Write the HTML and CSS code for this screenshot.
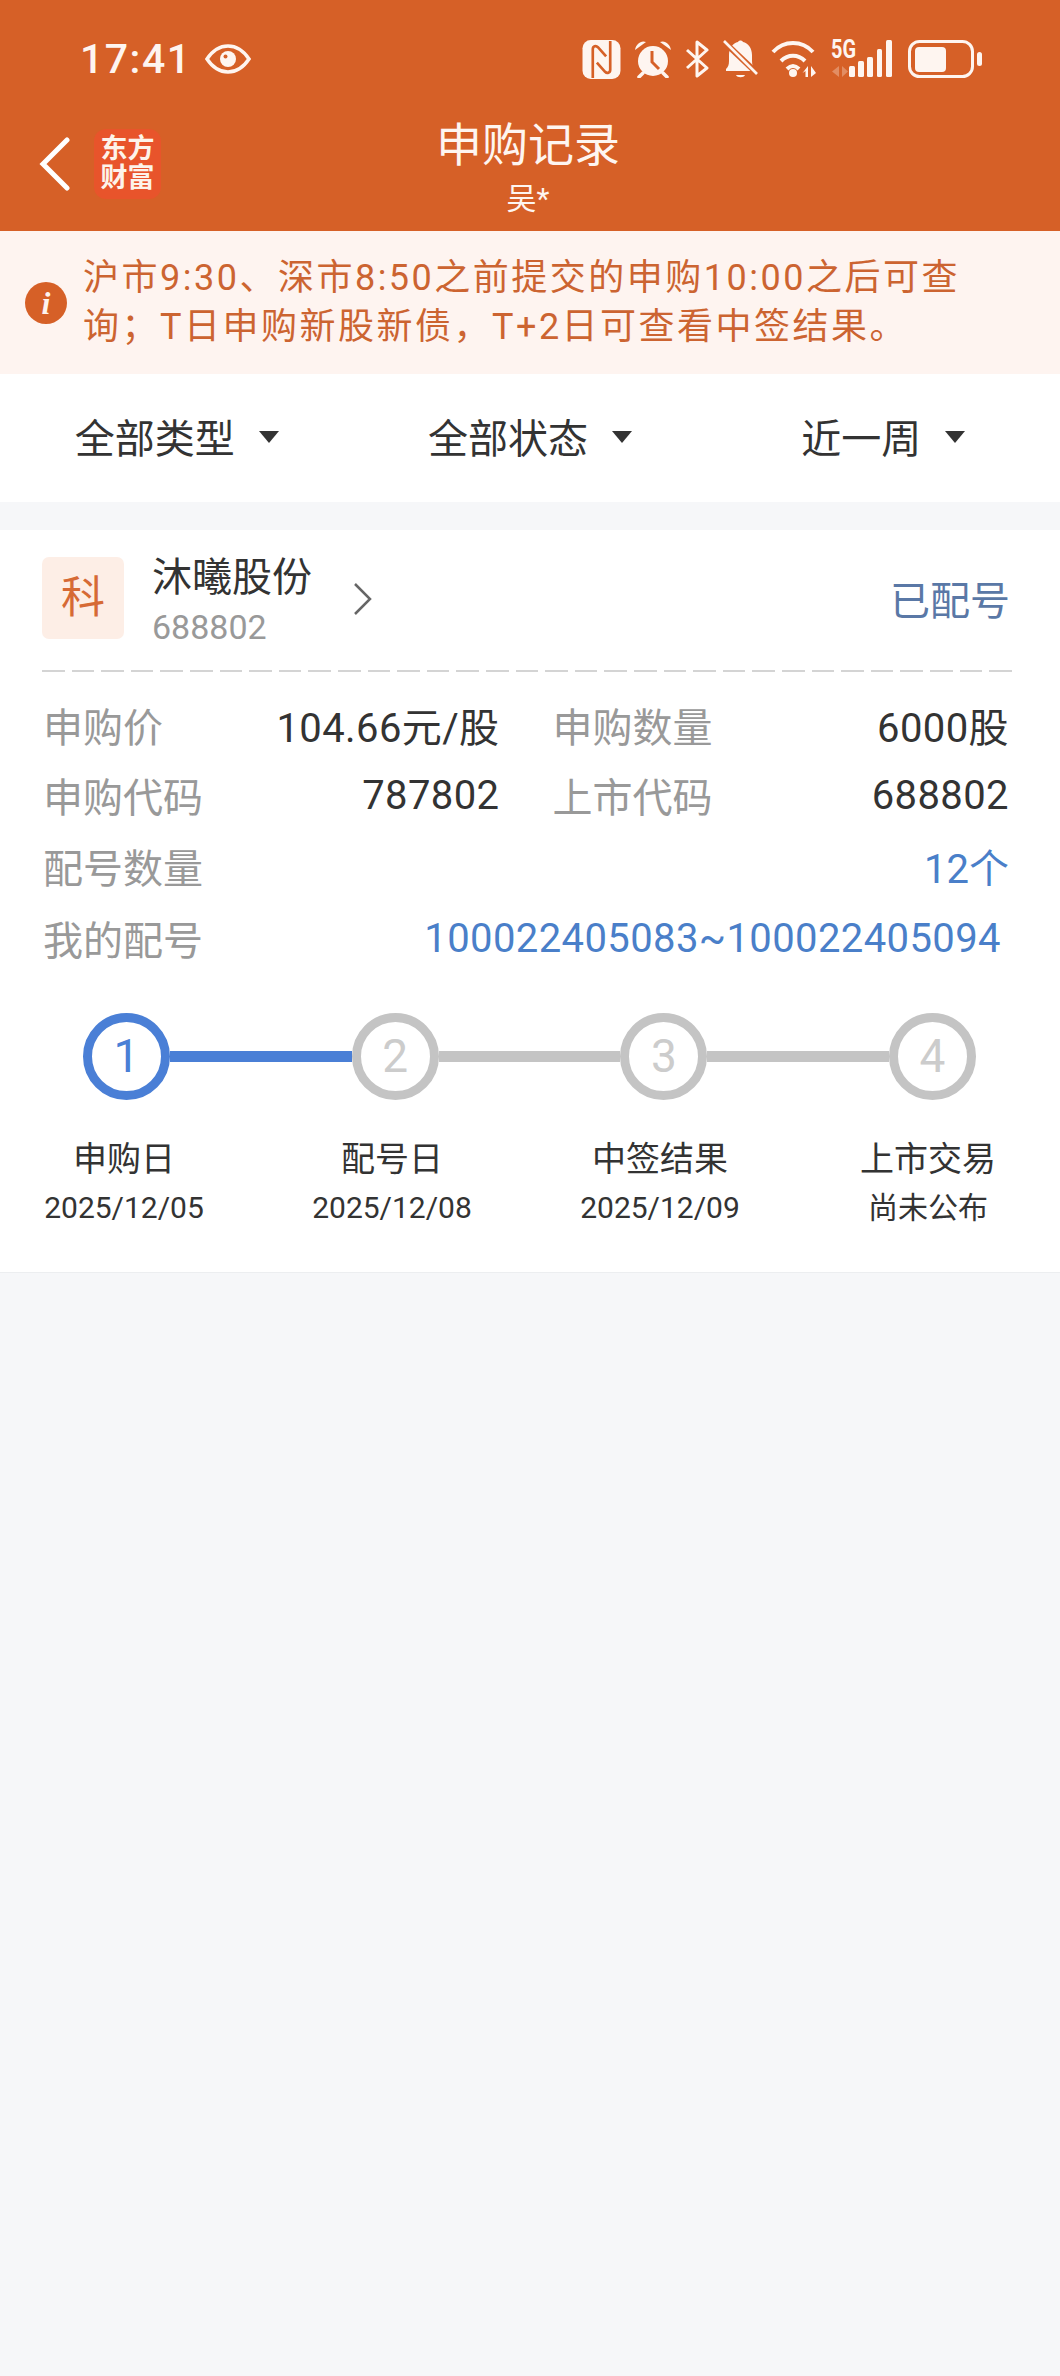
FILE: index.html
```html
<!DOCTYPE html>
<html lang="zh-CN">
  <head>
    <meta charset="UTF-8" />
    <title>申购记录</title>
    <link rel="stylesheet" href="styles.css">
  </head>
  <body>
    <header class="header">
      <div class="status-bar">
        <div class="status-left">
          <span class="time">17:41</span>
          <svg class="eye" width="46" height="32" viewBox="0 0 46 32">
            <path d="M2 16C8 7 15 3 23 3s15 4 21 13c-6 9-13 13-21 13S8 25 2 16z" fill="none" stroke="#fef5f0" stroke-width="3.5"/>
            <circle cx="23" cy="16" r="8" fill="#fef5f0"/>
            <circle cx="20.5" cy="13.5" r="2" fill="#d66027"/>
          </svg>
        </div>
        <div class="status-icons">
          <svg width="39" height="39" viewBox="0 0 37 38">
            <rect x="0" y="0" width="37" height="38" rx="8" fill="#fef5f0"/>
            <path d="M10 37V9c0-3 3-4 5-2l8 9" fill="none" stroke="#d66027" stroke-width="2.6"/>
            <path d="M27 1v28c0 3-3 4-5 2l-8-9" fill="none" stroke="#d66027" stroke-width="2.6"/>
          </svg>
          <svg width="38" height="38" viewBox="0 0 38 38">
            <circle cx="19" cy="21" r="15" fill="#fef5f0"/>
            <path d="M1 10C2 4 7 0 12 2z M37 10C36 4 31 0 26 2z" fill="#fef5f0"/>
            <path d="M9 33l-4 4M29 33l4 4" stroke="#fef5f0" stroke-width="3.5" stroke-linecap="round"/>
            <path d="M18 11v11l7 7" fill="none" stroke="#d66027" stroke-width="3"/>
          </svg>
          <svg width="25" height="38" viewBox="0 0 25 38">
            <path d="M2 10l20 18-10 8V2l10 8L2 28" fill="none" stroke="#fef5f0" stroke-width="3" stroke-linejoin="round"/>
          </svg>
          <svg width="35" height="40" viewBox="0 0 35 40">
            <path d="M3 30c2-2 3-4 3-8V16C6 9 10 4 15 3c1-2 4-2 5 0 5 1 9 6 9 13v6c0 4 1 6 3 8v2H3z" fill="#fef5f0"/>
            <path d="M13 36h9c-1 3-8 3-9 0z" fill="#fef5f0"/>
            <path d="M-1 1L36 36" stroke="#d66027" stroke-width="6"/>
            <path d="M1 2L34 35" stroke="#fef5f0" stroke-width="2.6"/>
          </svg>
          <svg width="47" height="38" viewBox="0 0 47 38">
            <g fill="none" stroke="#fef5f0" stroke-width="4">
              <path d="M2 12C13 0 31 0 42 12"/>
              <path d="M10 21c7-7 17-7 24 0"/>
              <path d="M16 29c4-4 8-4 12 0"/>
            </g>
            <circle cx="22" cy="33" r="4" fill="#fef5f0"/>
            <path d="M37 26v11h-2.500v-6l-3 2zM40 26v11l5-4z" fill="#fef5f0"/>
          </svg>
          <svg class="signal" width="61" height="46" viewBox="0 -8 61 46">
            <text x="0" y="18" class="net-text" textLength="25" lengthAdjust="spacingAndGlyphs">5G</text>
            <path d="M8 26v11l-7-5.500zM11 26v11l6-5.500z" fill="#fef5f0" opacity="0.3"/>
            <rect x="18" y="26" width="6" height="11" rx="1.500" fill="#fef5f0"/>
            <rect x="27" y="21" width="6" height="16" rx="1.500" fill="#fef5f0"/>
            <rect x="36" y="17" width="6" height="20" rx="1.500" fill="#fef5f0"/>
            <rect x="46" y="9" width="5" height="28" rx="1.500" fill="#fef5f0"/>
            <rect x="55" y="0" width="6" height="37" rx="1.500" fill="#fef5f0"/>
          </svg>
          <svg class="battery" width="75" height="38" viewBox="0 0 75 38">
            <rect x="1.500" y="1.500" width="63" height="35" rx="10" fill="none" stroke="#fef5f0" stroke-width="3"/>
            <rect x="7" y="7" width="31" height="25" rx="4" fill="#fef5f0"/>
            <rect x="69" y="12" width="5" height="14" rx="2.500" fill="#fef5f0"/>
          </svg>
        </div>
      </div>
      <div class="nav">
        <div class="nav-left">
          <svg class="back" width="32" height="54" viewBox="0 0 32 54">
            <path d="M28 3L4 27l24 24" fill="none" stroke="#fff" stroke-width="5" stroke-linecap="round" stroke-linejoin="miter"/>
          </svg>
          <div class="logo">东方<br />财富</div>
        </div>
        <div class="nav-title">
          <h1>申购记录</h1>
          <div class="sub">吴*</div>
        </div>
      </div>
    </header>

    <div class="notice">
      <span class="info-icon">i</span>
      <p>沪市9:30、深市8:50之前提交的申购10:00之后可查询；T日申购新股新债，T+2日可查看中签结果。</p>
    </div>

    <div class="filters">
      <div class="filter">全部类型<span class="caret"></span></div>
      <div class="filter">全部状态<span class="caret"></span></div>
      <div class="filter">近一周<span class="caret"></span></div>
    </div>

    <section class="card">
      <div class="card-head">
        <div class="badge">科</div>
        <div class="stock">
          <div class="stock-name">沐曦股份</div>
          <div class="stock-code">688802</div>
        </div>
        <svg class="chevron" width="20" height="34" viewBox="0 0 20 34">
          <path d="M2 2l15 15L2 32" fill="none" stroke="#666" stroke-width="2.500"/>
        </svg>
        <div class="state">已配号</div>
      </div>
      <div class="dash"></div>

      <div class="info-grid">
        <div class="row"><span class="label">申购价</span><span class="nums">104.66元/股</span></div>
        <div class="row"><span class="label">申购数量</span><span class="nums">6000股</span></div>
        <div class="row"><span class="label">申购代码</span><span class="nums">787802</span></div>
        <div class="row"><span class="label">上市代码</span><span class="nums">688802</span></div>
        <div class="row wide"><span class="label">配号数量</span><span class="blue">12个</span></div>
        <div class="row wide last"><span class="label">我的配号</span><span class="blue nums">100022405083~100022405094</span></div>
      </div>

      <div class="steps">
        <div class="step-dot active">1</div>
        <div class="step-line active"></div>
        <div class="step-dot">2</div>
        <div class="step-line"></div>
        <div class="step-dot">3</div>
        <div class="step-line"></div>
        <div class="step-dot">4</div>
      </div>
      <div class="step-labels">
        <div class="step-label"><div class="step-name">申购日</div><div class="step-date">2025/12/05</div></div>
        <div class="step-label"><div class="step-name">配号日</div><div class="step-date">2025/12/08</div></div>
        <div class="step-label"><div class="step-name">中签结果</div><div class="step-date">2025/12/09</div></div>
        <div class="step-label"><div class="step-name">上市交易</div><div class="step-date">尚未公布</div></div>
      </div>
    </section>
  </body>
</html>
```

FILE: styles.css
```css
* {
  box-sizing: border-box;
}
body {
  margin: 0;
  background: #f6f7f9;
  color: #333;
  font-family: Roboto, "Noto Sans CJK SC", sans-serif;
}
.header {
  background: #d66027;
  height: 231px;
  color: #fff;
}
.status-bar {
  display: flex;
  justify-content: space-between;
  align-items: center;
  height: 96px;
  padding: 22px 77px 0 80px;
}
.status-left {
  display: flex;
  align-items: center;
  gap: 13px;
}
.time {
  font-size: 41px;
  font-weight: 500;
  letter-spacing: 1.5px;
  color: #fef5f0;
}
.status-icons {
  display: flex;
  align-items: center;
  gap: 13px;
}
.net-text {
  font-family: Roboto, sans-serif;
  font-size: 25px;
  font-weight: 700;
  fill: #fef5f0;
}
.signal {
  margin-top: -8px;
}
.battery {
  margin-left: 3px;
}
.nav {
  display: grid;
  grid-template-columns: 1fr auto 1fr;
  align-items: center;
  height: 135px;
}
.nav-left {
  display: flex;
  align-items: center;
  padding-left: 39px;
  gap: 23px;
}
.logo {
  width: 67px;
  height: 70px;
  padding-top: 6px;
  background: #e8542b;
  border-radius: 12px;
  font-size: 27px;
  line-height: 29px;
  font-weight: 700;
  text-align: center;
  color: #fdf3ea;
}
.nav-title {
  margin-right: 4px;
  padding-top: 11px;
  text-align: center;
}
h1 {
  margin: 0;
  font-size: 46px;
  font-weight: 400;
  line-height: 60px;
  color: #fef5f0;
}
.sub {
  font-size: 30px;
  line-height: 48px;
  color: #fef5f0;
}
.notice {
  display: flex;
  align-items: center;
  height: 143px;
  padding-left: 25px;
  background: #fef4f0;
  color: #cc6431;
}
.notice p {
  width: 900px;
  margin: 0 0 0 16px;
  font-size: 36px;
  line-height: 48.5px;
  letter-spacing: 2.5px;
}
.info-icon {
  flex: none;
  width: 42px;
  height: 42px;
  border-radius: 50%;
  background: #d66027;
  color: #fef3ef;
  font-family: "Liberation Serif", serif;
  font-size: 32px;
  font-weight: 700;
  font-style: italic;
  line-height: 42px;
  text-align: center;
}
.filters {
  display: grid;
  grid-template-columns: repeat(3, 1fr);
  height: 128px;
  background: #fff;
}
.filter {
  display: flex;
  align-items: center;
  justify-content: center;
  padding-bottom: 4px;
  font-size: 40px;
}
.caret {
  width: 0;
  height: 0;
  margin: 2px 0 0 24px;
  border-left: 10px solid transparent;
  border-right: 10px solid transparent;
  border-top: 12px solid #333;
}
.card {
  margin-top: 28px;
  padding-top: 24px;
  background: #fff;
  border-bottom: 1px solid #eceef0;
  height: 743px;
}
.card-head {
  display: flex;
  align-items: center;
  padding: 0 50px 0 42px;
}
.badge {
  width: 82px;
  height: 82px;
  margin-bottom: 5px;
  border-radius: 7px;
  background: #fdeee6;
  color: #d66a35;
  font-size: 44px;
  line-height: 82px;
  text-align: center;
}
.stock {
  margin-left: 28px;
}
.stock-name {
  font-size: 40px;
  line-height: 48px;
}
.stock-code {
  margin-top: 5px;
  font-size: 34px;
  line-height: 40px;
  color: #999;
}
.chevron {
  margin: 0 0 4px 41px;
}
.state {
  margin: 0 0 6px auto;
  font-size: 40px;
  color: #5a78a6;
}
.dash {
  height: 2px;
  margin: 22.5px 45px 0 42px;
  background: repeating-linear-gradient(90deg, #d4d4d4 0 22.6px, transparent 22.6px 29.6px);
}
.info-grid {
  display: grid;
  grid-template-columns: 1fr 1fr;
  column-gap: 53px;
  padding: 18px 51px 0 43px;
}
.row {
  display: flex;
  justify-content: space-between;
  align-items: center;
  height: 70.5px;
  font-size: 40px;
}
.wide {
  grid-column: span 2;
}
.last {
  margin-top: 2px;
  padding-right: 8px;
}
.label {
  color: #999;
}
.blue {
  color: #4a7fc9;
}
.nums {
  letter-spacing: 0.4px;
}
.steps {
  display: flex;
  align-items: center;
  margin-top: 39px;
  padding: 0 84px 0 83px;
}
.step-dot {
  flex: none;
  width: 87px;
  height: 87px;
  border: 9px solid #c4c4c4;
  border-radius: 50%;
  color: #ccc;
  font-size: 46px;
  line-height: 69px;
  text-align: center;
}
.step-dot.active {
  border-color: #4a7fd6;
  color: #4a7fd6;
}
.step-line {
  flex: 1;
  height: 11px;
  background: #c4c4c4;
}
.step-line.active {
  background: #4a7fd6;
}
.step-labels {
  display: grid;
  grid-template-columns: repeat(4, 200px);
  column-gap: 68px;
  margin-top: 35px;
  padding-left: 24px;
}
.step-label {
  text-align: center;
}
.step-name {
  font-size: 34px;
  line-height: 48px;
}
.step-date {
  font-size: 30px;
  line-height: 50px;
}
```
